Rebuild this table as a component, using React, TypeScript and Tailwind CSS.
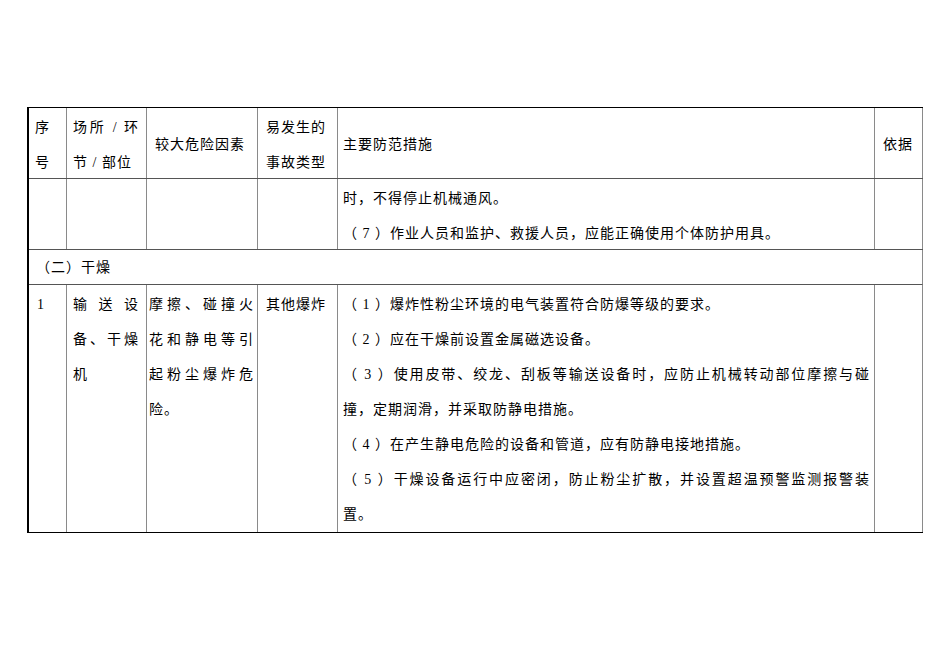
const font = { fontFamily: '"Liberation Serif", "Noto Sans CJK SC", serif' };

// full line stretched across the cell, like Word's justified text
const J = ({ children }: { children: React.ReactNode }) => (
  <div className="text-justify [text-align-last:justify] whitespace-nowrap">{children}</div>
);
const L = ({ children }: { children: React.ReactNode }) => <div className="whitespace-nowrap">{children}</div>;

const cellBase = 'border-r border-[#8a8a8a] shrink-0';
const headCell = 'flex flex-col justify-center pt-[3px]';

export default function App() {
  return (
    <div className="min-h-[672px] w-[950px] bg-white pt-[107px] pl-[27px] text-[14px] leading-[35px] tracking-[1px] text-black" style={font}>
      <div className="w-[896px] border-t border-l-2 border-b-[1.5px] border-black">
        {/* header */}
        <div className="flex h-[71px] border-b border-[#555]">
          <div className={`${cellBase} ${headCell} w-[38px] pl-[6px]`}>
            <L>序</L>
            <L>号</L>
          </div>
          <div className={`${cellBase} ${headCell} w-[80px] pl-[6px] pr-[7px]`}>
            <J>场所 / 环</J>
            <L>节 / 部位</L>
          </div>
          <div className={`${cellBase} ${headCell} w-[111px] pl-[8px]`}>
            <L>较大危险因素</L>
          </div>
          <div className={`${cellBase} ${headCell} w-[80px] pl-[8px]`}>
            <L>易发生的</L>
            <L>事故类型</L>
          </div>
          <div className={`${cellBase} ${headCell} w-[537px] pl-[5px]`}>
            <L>主要防范措施</L>
          </div>
          <div className={`${cellBase} ${headCell} w-[48px] pl-[8px]`}>
            <L>依据</L>
          </div>
        </div>

        {/* continued row */}
        <div className="flex h-[71px] border-b border-[#555]">
          <div className={`${cellBase} w-[38px]`} />
          <div className={`${cellBase} w-[80px]`} />
          <div className={`${cellBase} w-[111px]`} />
          <div className={`${cellBase} w-[80px]`} />
          <div className={`${cellBase} w-[537px] pl-[5px] pr-[4px] pt-[2px]`}>
            <L>时，不得停止机械通风。</L>
            <L>（ 7 ）作业人员和监护、救援人员，应能正确使用个体防护用具。</L>
          </div>
          <div className={`${cellBase} w-[48px]`} />
        </div>

        {/* section */}
        <div className="h-[35px] border-b border-[#555] border-r border-r-[#8a8a8a] pl-[7px]">
          <L>（二）干燥</L>
        </div>

        {/* item 1 */}
        <div className="flex h-[247px]">
          <div className={`${cellBase} w-[38px] pl-[8px] pt-[2px]`}>
            <L>1</L>
          </div>
          <div className={`${cellBase} w-[80px] pl-[6px] pr-[7px] pt-[2px]`}>
            <J>输送设</J>
            <J>备、干燥</J>
            <L>机</L>
          </div>
          <div className={`${cellBase} w-[111px] pl-[2px] pr-[3px] pt-[2px]`}>
            <J>摩擦、碰撞火</J>
            <J>花和静电等引</J>
            <J>起粉尘爆炸危</J>
            <L>险。</L>
          </div>
          <div className={`${cellBase} w-[80px] pl-[8px] pt-[2px]`}>
            <L>其他爆炸</L>
          </div>
          <div className={`${cellBase} w-[537px] pl-[5px] pr-[4px] pt-[2px]`}>
            <L>（ 1 ）爆炸性粉尘环境的电气装置符合防爆等级的要求。</L>
            <L>（ 2 ）应在干燥前设置金属磁选设备。</L>
            <J>（ 3 ）使用皮带、绞龙、刮板等输送设备时，应防止机械转动部位摩擦与碰</J>
            <L>撞，定期润滑，并采取防静电措施。</L>
            <L>（ 4 ）在产生静电危险的设备和管道，应有防静电接地措施。</L>
            <J>（ 5 ）干燥设备运行中应密闭，防止粉尘扩散，并设置超温预警监测报警装</J>
            <L>置。</L>
          </div>
          <div className={`${cellBase} w-[48px]`} />
        </div>
      </div>
    </div>
  );
}
